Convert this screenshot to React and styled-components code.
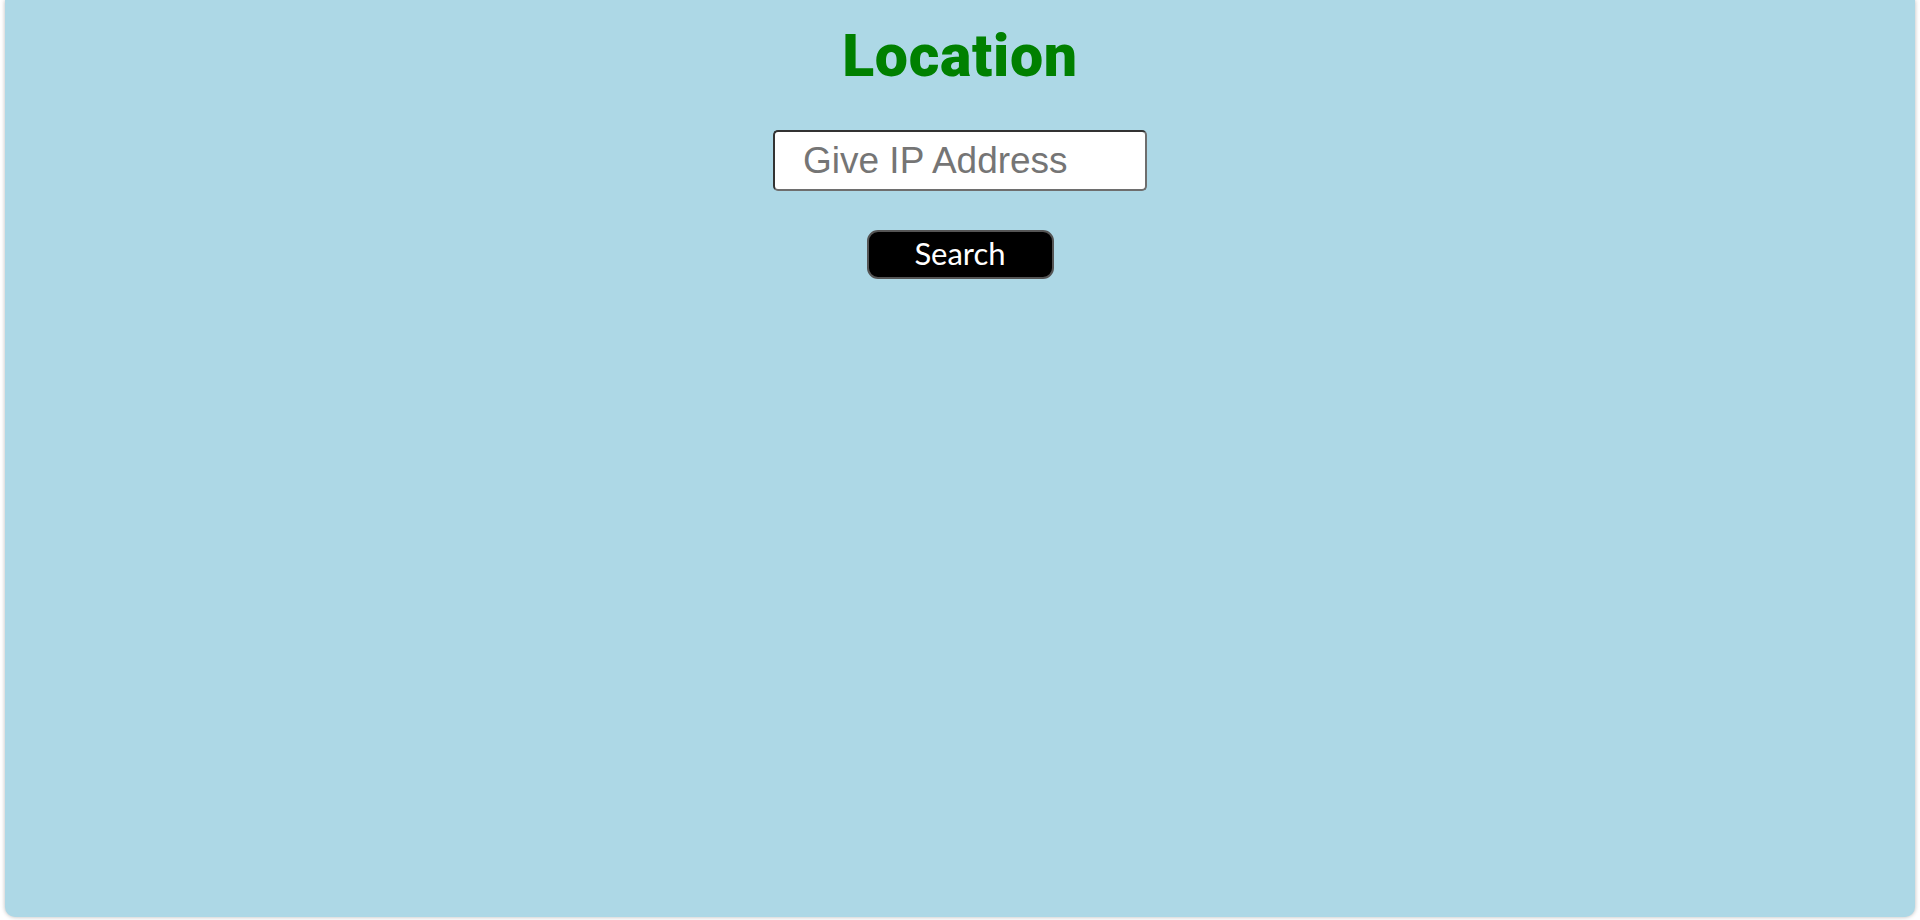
import React from "react";
import styled, { createGlobalStyle } from "styled-components";

const Global = createGlobalStyle`
  html, body { margin: 0; padding: 0; background: #ffffff; }
  body { font-family: "Liberation Sans", Arial, sans-serif; }
`;

const Page = styled.div`
  padding: 0 5px 3px 5px;
  height: 920px;
  box-sizing: border-box;
`;

const Card = styled.main`
  height: 100%;
  box-sizing: border-box;
  background: #add8e6;
  border-radius: 0 0 10px 10px;
  box-shadow: 0 0 4px rgba(0, 0, 0, 0.28);
  display: flex;
  flex-direction: column;
  align-items: center;
  padding-top: 22px;
`;

const Title = styled.h1`
  margin: 0;
  font-family: Roboto, "Liberation Sans", Arial, sans-serif;
  font-weight: 900;
  font-size: 59px;
  line-height: 68px;
  letter-spacing: 0.7px;
  color: #008000;
`;

const Input = styled.input`
  margin-top: 40px;
  width: 374px;
  height: 61px;
  box-sizing: border-box;
  border: 2px solid #333;
  border-bottom-color: #6e6e6e;
  border-right-color: #6e6e6e;
  border-radius: 5px;
  background: #fff;
  padding: 0 0 0 28px;
  font-family: "Liberation Sans", Arial, sans-serif;
  font-size: 37px;
  color: #333;
  outline: none;
  &::placeholder { color: #757575; }
`;

const Button = styled.button`
  margin-top: 39px;
  width: 187px;
  height: 49px;
  box-sizing: border-box;
  background: #000;
  color: #fff;
  border: 2px solid #555;
  border-radius: 11px;
  font-family: Lato, "Open Sans", sans-serif;
  font-size: 31px;
  line-height: 1;
  padding: 0 0 2px;
  cursor: pointer;
`;

export default function App() {
  return (
    <>
      <Global />
      <Page>
        <Card>
          <Title>Location</Title>
          <Input type="text" placeholder="Give IP Address" />
          <Button>Search</Button>
        </Card>
      </Page>
    </>
  );
}
